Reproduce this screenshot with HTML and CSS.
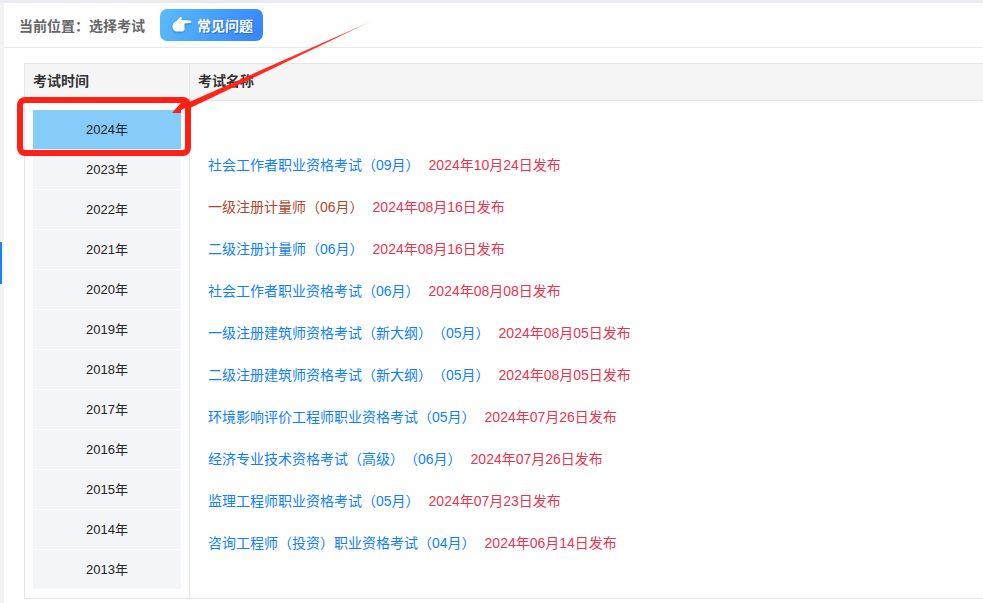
FILE: index.html
```html
<!DOCTYPE html>
<html lang="zh-CN">
<head>
<meta charset="utf-8">
<title>选择考试</title>
<link rel="stylesheet" href="styles.css">
</head>
<body>
<div class="page">
  <aside class="rail"><span class="rail-mark"></span></aside>
  <main class="main">
    <header class="crumb">
      <span class="crumb-text">当前位置：选择考试</span>
      <a class="faq">
        <svg class="faq-icon" viewBox="0 0 20 18" width="20" height="18"><path class="hand" d="M0.500 10C0.500 7.500 2.500 6 4.500 5L8 1.200C9.300 0.400 10.500 1.200 9.800 2.700L9.200 4L18 4.500C19.800 4.700 19.800 6.800 18 7L12.500 7.400L12.500 13.500C12.500 15 11 15.500 9.500 15.500L5 15.500C2 15.500 0.500 13 0.500 10Z"/></svg>
        <span class="faq-text">常见问题</span>
      </a>
    </header>
    <section class="table">
      <div class="col-time">
        <div class="head">考试时间</div>
        <ul class="years">
          <li class="year active">2024年</li>
          <li class="year">2023年</li>
          <li class="year">2022年</li>
          <li class="year">2021年</li>
          <li class="year">2020年</li>
          <li class="year">2019年</li>
          <li class="year">2018年</li>
          <li class="year">2017年</li>
          <li class="year">2016年</li>
          <li class="year">2015年</li>
          <li class="year">2014年</li>
          <li class="year">2013年</li>
        </ul>
      </div>
      <div class="col-name">
        <div class="head">考试名称</div>
        <ul class="exams">
          <li class="exam"><a class="exam-name">社会工作者职业资格考试（09月）</a><span class="exam-date">2024年10月24日发布</span></li>
          <li class="exam"><a class="exam-name visited">一级注册计量师（06月）</a><span class="exam-date">2024年08月16日发布</span></li>
          <li class="exam"><a class="exam-name">二级注册计量师（06月）</a><span class="exam-date">2024年08月16日发布</span></li>
          <li class="exam"><a class="exam-name">社会工作者职业资格考试（06月）</a><span class="exam-date">2024年08月08日发布</span></li>
          <li class="exam"><a class="exam-name">一级注册建筑师资格考试（新大纲）（05月）</a><span class="exam-date">2024年08月05日发布</span></li>
          <li class="exam"><a class="exam-name">二级注册建筑师资格考试（新大纲）（05月）</a><span class="exam-date">2024年08月05日发布</span></li>
          <li class="exam"><a class="exam-name">环境影响评价工程师职业资格考试（05月）</a><span class="exam-date">2024年07月26日发布</span></li>
          <li class="exam"><a class="exam-name">经济专业技术资格考试（高级）（06月）</a><span class="exam-date">2024年07月26日发布</span></li>
          <li class="exam"><a class="exam-name">监理工程师职业资格考试（05月）</a><span class="exam-date">2024年07月23日发布</span></li>
          <li class="exam"><a class="exam-name">咨询工程师（投资）职业资格考试（04月）</a><span class="exam-date">2024年06月14日发布</span></li>
        </ul>
      </div>
    </section>
  </main>
</div>
<svg class="annotation" width="983" height="603" viewBox="0 0 983 603">
  <defs>
    <linearGradient id="tail" gradientUnits="userSpaceOnUse" x1="372" y1="21" x2="190" y2="108">
      <stop offset="0" stop-color="#ff2015" stop-opacity="0.3"/>
      <stop offset="0.2" stop-color="#ff2015" stop-opacity="0.9"/>
      <stop offset="1" stop-color="#ff2015"/>
    </linearGradient>
  </defs>
  <rect x="20" y="100" width="168" height="53" rx="5" fill="none" stroke="#ff2015" stroke-width="6"/>
  <path d="M373 20.500L188 109L186 103.500Z" fill="url(#tail)"/>
  <path d="M172 113L183 100.500L186 104.500L192 104.500L181 110L181 113Z" fill="#ff2015"/>
</svg>
</body>
</html>
```
FILE: styles.css
```css
* { box-sizing: border-box; }
html, body { margin: 0; padding: 0; height: 100%; overflow: hidden; background: #fff; }
body { font-family: "Liberation Sans", "Noto Sans CJK SC", sans-serif; font-size: 14px; color: #333; text-spacing-trim: space-all; }
ul { list-style: none; margin: 0; padding: 0; }
.page { display: flex; height: 603px; width: 983px; border-top: 3px solid #e9ebee; }
.rail { width: 4px; flex: none; background: #f3f3f4; padding-top: 239px; }
.rail-mark { display: block; width: 2px; height: 42px; background: #1a82f5; }
.main { flex: 1; min-width: 0; display: flex; flex-direction: column; }
.crumb { height: 45px; flex: none; display: flex; align-items: center; gap: 15px; padding-left: 15px; border-bottom: 1px solid #e8e8e8; }
.crumb-text { font-size: 14px; font-weight: bold; color: #666; white-space: nowrap; }
.faq { width: 103px; height: 32px; border-radius: 7px; background: linear-gradient(115deg, #5abdf9, #3484fd); display: flex; align-items: center; gap: 5px; padding-left: 12px; color: #fff; font-weight: bold; font-size: 14px; }
.faq-icon { flex: none; filter: drop-shadow(0 1px 1px rgba(0, 40, 120, .35)); }
.hand { fill: #fff; }
.faq-text { text-shadow: 1px 1px 1px rgba(0, 40, 120, .4); white-space: nowrap; }
.table { margin: 15px 0 0 20px; width: 980px; height: 536px; display: flex; border: 1px solid #e5e5e5; }
.col-time { width: 165px; flex: none; border-right: 1px solid #e5e5e5; }
.col-name { flex: 1; }
.head { height: 37px; background: #f5f5f5; border-bottom: 1px solid #e5e5e5; padding-left: 8px; line-height: 35px; font-size: 14px; font-weight: bold; color: #333; }
.years { padding: 9px 8px 0; }
.year { height: 39px; margin-bottom: 1px; line-height: 39px; text-align: center; background: #f4f5f9; font-size: 13px; color: #222; }
.year.active { background: #85ccfb; }
.exams { padding: 43px 0 0 18px; }
.exam { height: 42px; line-height: 42px; white-space: nowrap; }
.exam-name { color: #0f80fa; }
.exam-name.visited { color: #b0452c; }
.exam-date { color: #e8344e; margin-left: 9px; }
.annotation { position: absolute; left: 0; top: 0; pointer-events: none; }
```
